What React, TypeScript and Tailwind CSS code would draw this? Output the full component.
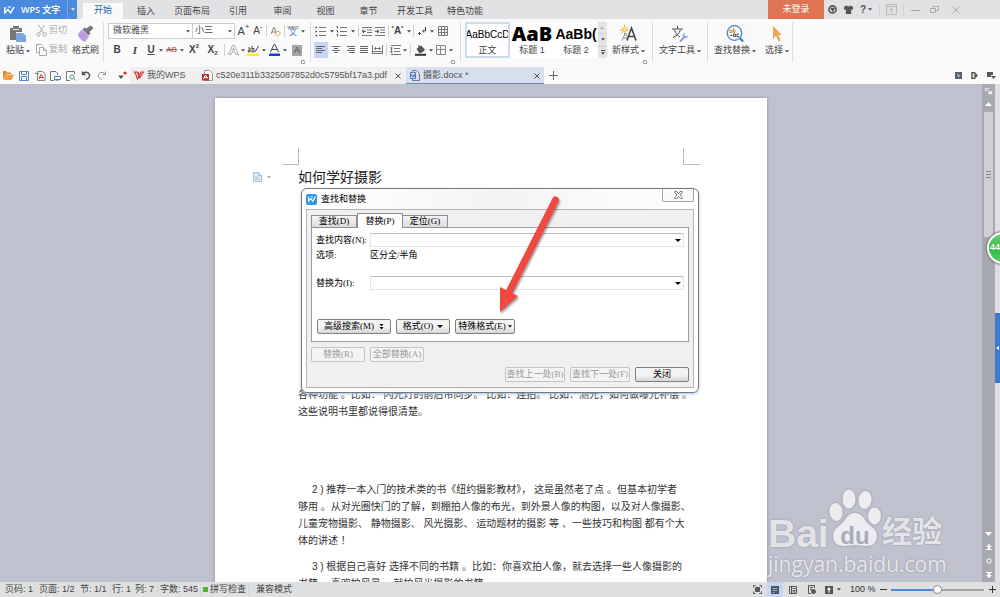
import React, { ReactNode } from "react";

const UI = "font-['Liberation_Sans','Noto_Sans_CJK_SC',sans-serif]";
const SERIF = "font-['Liberation_Serif','Noto_Sans_CJK_SC',serif]";

function Svg({ className, box = "0 0 16 16", children }: { className: string; box?: string; children: ReactNode }) {
  return (
    <svg className={className} viewBox={box} fill="none" stroke="currentColor" strokeWidth="1" aria-hidden="true">
      {children}
    </svg>
  );
}

function Caret({ className = "text-[#444]" }: { className?: string }) {
  return (
    <Svg className={`h-[3px] w-[4px] shrink-0 ${className}`} box="0 0 4 3">
      <path d="M0 .3h4L2 2.600z" fill="currentColor" stroke="none" />
    </Svg>
  );
}

function ComboCaret() {
  return (
    <Svg className="h-[3px] w-[6px] shrink-0 text-black" box="0 0 6 3">
      <path d="M0 0h6L3 3z" fill="currentColor" stroke="none" />
    </Svg>
  );
}

function Tool({ w, label, className = "", children }: { w: string; label: string; className?: string; children: ReactNode }) {
  return (
    <button aria-label={label} className={`flex h-4 shrink-0 items-center justify-center leading-none ${w} ${className}`}>
      {children}
    </button>
  );
}

function Drop({ w = "w-[6px]", label }: { w?: string; label: string }) {
  return (
    <Tool w={w} label={label}>
      <Caret />
    </Tool>
  );
}

function Bar({ w = "w-[4px]" }: { w?: string }) {
  return (
    <span className={`flex h-3 shrink-0 justify-center ${w}`}>
      <span className="w-px bg-[#d2d2d4]" />
    </span>
  );
}

function GroupLine() {
  return <span className="mt-[3px] h-10 w-px shrink-0 bg-[#dcdcdc]" />;
}

function Launcher({ className }: { className: string }) {
  return (
    <button aria-label="更多设置" className={`absolute bottom-[3px] ${className}`}>
      <Svg className="h-[4px] w-[4px] text-[#999]" box="0 0 4 4">
        <path d="M.5 3.500v-3h3M3.500 1.500v2h-2" />
      </Svg>
    </button>
  );
}

function Lines({ widths }: { widths: [number, number][] }) {
  return (
    <Svg className="h-[10px] w-[10px] text-[#666]" box="0 0 10 10">
      {widths.map(([a, b], i) => (
        <path key={i} d={`M${a} ${i * 2 + 1.5}H${b}`} />
      ))}
    </Svg>
  );
}

function ListIcon({ numbered }: { numbered?: boolean }) {
  return (
    <Svg className="h-[11px] w-[12px] text-[#777]" box="0 0 12 11">
      <path d="M4 1.500h7M4 5.500h7M4 9.500h7" />
      {numbered ? (
        <path d="M.5 .5h1v2M.5 4.500h1v2M.5 8.500h1v2" stroke="#555" />
      ) : (
        <path d="M.5 1.500H2M.5 5.500H2M.5 9.500H2" stroke="#444" strokeWidth="1.500" />
      )}
    </Svg>
  );
}

function IndentIcon({ right }: { right?: boolean }) {
  return (
    <Svg className="h-[11px] w-[10px] text-[#777]" box="0 0 10 11">
      <path d="M0 1.500h10M5 4h5M5 6.500h5M0 9.500h10" />
      {right ? <path d="M0 5.300h3M2 3.600l2 1.700-2 1.700" stroke="#444" /> : <path d="M1 5.300h3M2 3.600L0 5.300 2 7" stroke="#444" />}
    </Svg>
  );
}

function WpsMark({ className }: { className: string }) {
  return (
    <Svg className={className} box="0 0 12 9">
      <path d="M.8 1v6.800L4.200 4l3 3.800L11 1.200V1" strokeWidth="1.700" />
      <path d="M4 1.200h3.500" strokeWidth="1.300" />
    </Svg>
  );
}

const MENUS: [string, string][] = [
  ["插入", "w-[46px]"],
  ["页面布局", "w-[46px]"],
  ["引用", "w-[46px]"],
  ["审阅", "w-[43px]"],
  ["视图", "w-[43px]"],
  ["章节", "w-[43px]"],
  ["开发工具", "w-[50px]"],
  ["特色功能", "w-[50px]"],
];

function TitleBar() {
  return (
    <header className="flex h-[19px] shrink-0 items-stretch bg-[#e2e2e5] text-[9px] text-[#444]">
      <button className="flex w-[77px] items-center gap-[6px] bg-[#4a8ade] pl-1 text-white">
        <WpsMark className="h-[8px] w-[11px]" />
        <span className="flex-1 text-left font-['Open_Sans','Noto_Sans_CJK_SC',sans-serif] font-semibold whitespace-nowrap">WPS 文字</span>
        <span className="flex h-full w-[10px] items-center justify-center border-l border-[#72a5e6]">
          <Caret className="text-white" />
        </span>
      </button>
      <nav className="ml-[6px] flex">
        <button className="mt-[3px] w-10 bg-[#fafafa] text-[#2467b4]">开始</button>
        {MENUS.map(([name, w]) => (
          <button key={name} className={`pt-[4px] ${w}`}>
            {name}
          </button>
        ))}
      </nav>
      <button className="ml-auto w-14 bg-[#de7452] text-white">未登录</button>
      <div className="flex w-[176px] items-center text-[#555]">
        <Tool w="w-[17px]" label="皮肤">
          <Svg className="h-[9px] w-[9px]" box="0 0 10 10">
            <circle cx="5" cy="5" r="4" strokeWidth="1.800" />
            <path d="M2 3h6L5.500 8z" fill="currentColor" stroke="none" />
          </Svg>
        </Tool>
        <Tool w="w-[15px]" label="换肤">
          <Svg className="h-[9px] w-[9px]" box="0 0 10 10">
            <path d="M3 .5L0 2v3h2v5h6V5h2V2L7 .5C6 2 4 2 3 .5z" fill="currentColor" stroke="none" />
          </Svg>
        </Tool>
        <Tool w="w-[20px]" label="帮助" className="gap-[2px] text-[10px] font-bold">
          ?<Caret />
        </Tool>
        <Bar w="w-[6px]" />
        <Tool w="w-[18px]" label="功能区" className="text-[#bbb]">
          <Svg className="h-[11px] w-[11px]" box="0 0 11 11">
            <path d="M.5 .5h10v10H.5zM.5 2.500h10M5.500 9V4.500M3.500 6.500l2-2 2 2" />
          </Svg>
        </Tool>
        <Bar w="w-[7px]" />
        <Tool w="w-[17px]" label="最小化" className="text-[#aaa]">
          <Svg className="h-[9px] w-[9px]" box="0 0 9 9">
            <path d="M0 5.500h9" />
          </Svg>
        </Tool>
        <Tool w="w-[20px]" label="还原" className="text-[#aaa]">
          <Svg className="h-[9px] w-[9px]" box="0 0 9 9">
            <path d="M.5 3.500h5v4h-5zM3 3.500v-2h5.500v4H6" />
          </Svg>
        </Tool>
        <Tool w="w-[24px]" label="关闭窗口" className="text-[#aaa]">
          <Svg className="h-[8px] w-[8px]" box="0 0 8 8">
            <path d="M.5 .5l7 7M7.500 .5l-7 7" />
          </Svg>
        </Tool>
      </div>
    </header>
  );
}

function BigTool({ w, label, caret, children }: { w: string; label: string; caret?: boolean; children: ReactNode }) {
  return (
    <button className={`flex shrink-0 flex-col items-center pt-[5px] ${w}`}>
      <span className="flex h-[19px] items-center">{children}</span>
      <span className="flex h-4 items-center gap-[2px] whitespace-nowrap">
        {label}
        {caret && <Caret />}
      </span>
    </button>
  );
}

function Ribbon() {
  return (
    <section className="flex h-[48px] shrink-0 bg-[#fafafa] text-[9px] text-[#444]">
      <BigTool w="w-[36px]" label="粘贴" caret>
        <Svg className="h-[18px] w-[18px]" box="0 0 18 18">
          <path d="M1 3h3V1h6v2h3v4H7v8H1z" fill="#777" stroke="none" />
          <path d="M4 4.500h6" stroke="#eee" />
          <path d="M7 8h7l3 3v6H7z" fill="#7ba3e0" stroke="none" />
        </Svg>
      </BigTool>
      <div className="flex w-[32px] flex-col gap-[3px] pt-[4px] text-[#aaa]">
        <button className="flex h-4 items-center gap-[2px] whitespace-nowrap">
          <Svg className="h-[12px] w-[11px] shrink-0" box="0 0 11 12">
            <path d="M2.500 0l5 8M8.500 0l-5 8" />
            <circle cx="2.500" cy="9.500" r="1.700" />
            <circle cx="8.500" cy="9.500" r="1.700" />
          </Svg>
          剪切
        </button>
        <button className="flex h-4 items-center gap-[2px] whitespace-nowrap">
          <Svg className="h-[12px] w-[11px] shrink-0" box="0 0 11 12">
            <path d="M3 8.500H.5v-8h5l1 1v1M3.500 3.500h4l3 3v5h-7zM7.500 3.500v3h3" />
          </Svg>
          复制
        </button>
      </div>
      <BigTool w="w-[35px]" label="格式刷">
        <Svg className="h-[17px] w-[17px]" box="0 0 17 17">
          <path d="M13.500 .5l3 2.500-4 4 1 1.500-2 2-6-6 2-2 2 1z" fill="#777" stroke="none" />
          <path d="M5 4.500l7 7-4 5.500C5 16 2 13 .5 9.500z" fill="#c29be6" stroke="none" />
        </Svg>
      </BigTool>
      <GroupLine />

      <div className="relative flex w-[206px] flex-col gap-[3px] pt-[4px] pl-1">
        <div className="flex h-4 items-center">
          <label className="relative flex h-4 w-[85px] items-center border border-[#ccc] bg-white">
            <select aria-label="字体" className="h-full w-full appearance-none pl-1 outline-none">
              <option>微软雅黑</option>
            </select>
            <Caret className="absolute right-[2px] text-[#444]" />
          </label>
          <label className="relative flex h-4 w-[42px] items-center border border-l-0 border-[#ccc] bg-white">
            <select aria-label="字号" className="h-full w-full appearance-none pl-[2px] outline-none">
              <option>小三</option>
            </select>
            <Caret className="absolute right-[2px] text-[#444]" />
          </label>
          <Tool w="w-[17px]" label="增大字号" className="text-[11px]">
            A<sup className="text-[8px]">+</sup>
          </Tool>
          <Tool w="w-[12px]" label="减小字号" className="text-[10px]">
            A<sup className="text-[8px]">-</sup>
          </Tool>
          <Bar />
          <Tool w="w-[14px]" label="清除格式">
            <Svg className="h-[11px] w-[11px]" box="0 0 11 11">
              <path d="M1 8L4 1l3 7M2 6h4" stroke="#888" />
              <path d="M5 8l3-3 2.500 2L7.500 10z" fill="#fff" stroke="#e9a24c" />
            </Svg>
          </Tool>
          <Bar />
          <Tool w="w-[14px]" label="拼音指南" className="flex-col text-[6px] text-[#555]">
            <span className="leading-[4px]">wén</span>
            <span className="text-[8px] leading-[8px] text-[#3b7bc8]">文</span>
          </Tool>
          <Drop label="拼音选项" />
        </div>
        <div className="flex h-4 items-center">
          <Tool w="w-[18px]" label="加粗" className="text-[10px] font-bold">B</Tool>
          <Tool w="w-[18px]" label="倾斜" className="font-['Liberation_Serif',serif] text-[11px] font-bold italic">I</Tool>
          <Tool w="w-[14px]" label="下划线" className="text-[10px] font-bold underline">U</Tool>
          <Drop label="下划线选项" />
          <Tool w="w-[15px]" label="删除线" className="text-[8px] text-[#a0504a] line-through">AB</Tool>
          <Drop label="删除线选项" />
          <Tool w="w-[18px]" label="上标" className="text-[10px] font-bold">
            X<sup className="-top-[4px] text-[6px]">2</sup>
          </Tool>
          <Tool w="w-[19px]" label="下标" className="text-[10px] font-bold">
            X<sub className="-bottom-[3px] text-[6px]">2</sub>
          </Tool>
          <Bar />
          <Tool w="w-[14px]" label="文字效果">
            <Svg className="h-[10px] w-[11px] text-[#aaa]" box="0 0 11 10">
              <path d="M.5 9.500l4-9h2l4 9H8L7 7H4L3 9.500zM4.700 5.200h1.600L5.500 3z" />
            </Svg>
          </Tool>
          <Drop label="文字效果选项" />
          <Tool w="w-[14px]" label="突出显示">
            <Svg className="h-[12px] w-[12px]" box="0 0 12 12">
              <rect y="9.500" width="12" height="2.500" fill="#ffee22" stroke="none" />
              <path d="M1 4h2v4H1.500L1 6.500 3 6M5 2v6h2V4.500H5M8 8l3.500-6" stroke="#444" />
            </Svg>
          </Tool>
          <Drop w="w-[7px]" label="突出显示选项" />
          <Tool w="w-[14px]" label="字体颜色">
            <Svg className="h-[12px] w-[11px]" box="0 0 11 12">
              <path d="M1.500 8L5 0.500h1L9.500 8M3 5.500h5" stroke="#444" />
              <rect y="9.500" width="11" height="2.500" fill="#1d3fd0" stroke="none" />
            </Svg>
          </Tool>
          <Drop w="w-[7px]" label="字体颜色选项" />
          <Tool w="w-[18px]" label="字符底纹">
            <span className="flex h-[11px] w-[10px] items-center justify-center bg-[#a5a5a9] text-[9px]">A</span>
          </Tool>
        </div>
        <Launcher className="right-[5px]" />
      </div>
      <GroupLine />

      <div className="relative flex w-[149px] flex-col gap-[3px] pt-[4px] pl-[3px]">
        <div className="flex h-4 items-center">
          <Tool w="w-[14px]" label="项目符号"><ListIcon /></Tool>
          <Drop w="w-[7px]" label="项目符号选项" />
          <Tool w="w-[14px]" label="编号"><ListIcon numbered /></Tool>
          <Drop w="w-[7px]" label="编号选项" />
          <Bar />
          <Tool w="w-[13px]" label="减少缩进"><IndentIcon /></Tool>
          <Tool w="w-[14px]" label="增加缩进"><IndentIcon right /></Tool>
          <Bar w="w-[2px]" />
          <Tool w="w-[17px]" label="字符缩放" className="text-[10px] font-bold">
            <sup className="text-[6px]">*</sup>A<sup className="text-[6px]">*</sup>
          </Tool>
          <Drop label="字符缩放选项" />
          <Bar w="w-[3px]" />
          <Tool w="w-[14px]" label="换行">
            <Svg className="h-[9px] w-[9px]" box="0 0 9 9">
              <path d="M7.500 0v4H5M3 6.500H.5M2 5L.5 6.500 2 8M6 2.500L4.500 4 6 5.500" />
            </Svg>
          </Tool>
          <Drop label="换行选项" />
          <Tool w="w-[16px]" label="插入表格">
            <Svg className="h-[10px] w-[10px] text-[#777]" box="0 0 10 10">
              <path d="M.5 .5h9v9h-9zM.5 3.500h9M.5 6.500h9M3.500 .5v9M6.500 .5v9" />
            </Svg>
          </Tool>
        </div>
        <div className="flex h-4 items-center">
          <Tool w="w-[14px]" label="左对齐" className="bg-[#c5d7f0]"><Lines widths={[[0, 9], [0, 6], [0, 9], [0, 6]]} /></Tool>
          <Tool w="w-[15px]" label="居中"><Lines widths={[[1, 9], [3, 7], [1, 9], [3, 7]]} /></Tool>
          <Tool w="w-[14px]" label="右对齐"><Lines widths={[[2, 10], [4, 10], [2, 10], [4, 10]]} /></Tool>
          <Tool w="w-[13px]" label="两端对齐"><Lines widths={[[1, 9], [1, 9], [1, 9], [1, 9]]} /></Tool>
          <Tool w="w-[14px]" label="分散对齐">
            <Svg className="h-[10px] w-[11px] text-[#777]" box="0 0 11 10">
              <path d="M.5 0v9M10.500 0v9M2 3.500h7M3.500 2v3M7.500 2v3M1 6.500h9M1 8.500h9" />
            </Svg>
          </Tool>
          <Bar w="w-[5px]" />
          <Tool w="w-[13px]" label="行距">
            <Svg className="h-[10px] w-[11px] text-[#777]" box="0 0 11 10">
              <path d="M1 .5h10M4 3.500h6M4 6.500h6M1 9.500h10M1.500 2v6M.3 3.500L1.500 2l1.200 1.500M.3 6.500L1.500 8l1.200-1.500" />
            </Svg>
          </Tool>
          <Drop label="行距选项" />
          <Bar w="w-[5px]" />
          <Tool w="w-[15px]" label="底纹">
            <Svg className="h-[11px] w-[11px]" box="0 0 11 11">
              <path d="M2 4l4-3 3.500 4L5 8zM4 3V0" fill="#555" />
              <path d="M0 9.800h11" strokeWidth="2" stroke="#333" />
            </Svg>
          </Tool>
          <Drop label="底纹选项" />
          <Tool w="w-[14px]" label="边框">
            <Svg className="h-[10px] w-[10px] text-[#888]" box="0 0 10 10">
              <path d="M.5 .5h9v9h-9zM.5 4.500h9M4.500 .5v9" />
            </Svg>
          </Tool>
          <Drop label="边框选项" />
        </div>
        <Launcher className="right-[5px]" />
      </div>
      <GroupLine />

      <div className="mt-[3px] ml-1 flex h-9 w-[142px] shrink-0 bg-white">
        <button className="flex w-[45px] flex-col items-center justify-between overflow-hidden border-2 border-[#cddaf0] pt-[3px] whitespace-nowrap">
          <span className="text-[10px] leading-4 text-black">AaBbCcD</span>
          <span className="leading-3">正文</span>
        </button>
        <button className="flex w-[44px] flex-col items-center justify-between overflow-hidden pt-[2px] pb-[2px] whitespace-nowrap">
          <span className="font-['Open_Sans',sans-serif] text-[20px] leading-[20px] font-extrabold text-black">AaB</span>
          <span className="leading-3">标题 1</span>
        </button>
        <button className="flex w-[44px] flex-col items-center justify-between overflow-hidden pt-[2px] pb-[2px] whitespace-nowrap">
          <span className="text-[14px] leading-[20px] font-bold text-black">AaBb(</span>
          <span className="leading-3">标题 2</span>
        </button>
        <div className="flex flex-1 flex-col gap-px bg-[#cfcfd1]">
          <button aria-label="上一行样式" className="flex flex-1 rotate-180 items-center justify-center bg-[#e4e4e6]"><Caret className="text-[#aaa]" /></button>
          <button aria-label="下一行样式" className="flex flex-1 items-center justify-center bg-[#e4e4e6]"><Caret /></button>
          <button aria-label="全部样式" className="flex flex-1 flex-col items-center justify-center gap-px bg-[#e4e4e6]">
            <span className="h-px w-[4px] bg-[#444]" />
            <Caret />
          </button>
        </div>
      </div>
      <div className="relative flex w-[45px]">
        <BigTool w="w-[43px]" label="新样式" caret>
          <Svg className="h-[17px] w-[17px]" box="0 0 17 17">
            <circle cx="4.500" cy="5" r="2" fill="#fbe9a0" stroke="#e2b92e" />
            <path d="M4.500 0v2M4.500 8v2M0 5h2M7 5h2M1 1.500L2.500 3M8 1.500L6.500 3M1 8.500L2.500 7" stroke="#e2b92e" />
            <path d="M2 15.500L5.500 8l2 4M4 13h3" stroke="#888" />
            <path d="M7 15.500L11.500 3 16 15.500M8.500 11.500h6" stroke="#444" strokeWidth="1.600" />
          </Svg>
        </BigTool>
        <Launcher className="right-[5px]" />
      </div>
      <GroupLine />
      <BigTool w="w-[54px]" label="文字工具" caret>
        <Svg className="h-[16px] w-[16px]" box="0 0 16 16">
          <path d="M5.500 0v2.500M0 3h11M2.500 4C4 8 6 10 8 11M8.500 4C7 8 4 10 1 11.500" stroke="#444" />
          <path d="M7 15.500l4-4.500c-1-2 .5-4 2.500-4L12 9l1.500 1.500L16 9.500c0 2-2 3-3.500 2.700L9 16z" fill="#8d9bd3" stroke="none" />
        </Svg>
      </BigTool>
      <GroupLine />
      <BigTool w="w-[54px]" label="查找替换" caret>
        <Svg className="h-[17px] w-[18px]" box="0 0 18 17">
          <circle cx="8.500" cy="8" r="7.300" stroke="#3c82d0" strokeWidth="1.200" />
          <path d="M13.500 12.500l3.500 4" stroke="#3c82d0" strokeWidth="2.400" />
          <path d="M4 5h2v2.500H4zM7.500 3v4.500H9V5H7.500" stroke="#d8923e" />
          <path d="M4 10.500h2.500M9.500 9h-2v2.500h2V9M13 9h-2v2.500h2" stroke="#555" />
        </Svg>
      </BigTool>
      <BigTool w="w-[30px]" label="选择" caret>
        <Svg className="h-[16px] w-[11px]" box="0 0 11 16">
          <path d="M1 0v13l3-3 2.500 5.500 2-1L6.500 9H10z" fill="#eda55c" stroke="none" />
        </Svg>
      </BigTool>
      <GroupLine />
    </section>
  );
}

function FileTabs() {
  return (
    <div className="flex h-[17px] shrink-0 items-stretch bg-[#fafafa] text-[9px] text-[#555]">
      <div className="flex w-[130px] items-center">
        <Tool w="w-[16px]" label="打开">
          <Svg className="h-[9px] w-[11px]" box="0 0 11 9">
            <path d="M0 8V0h3l1 1.500h4V3H3z" fill="#e08a2e" stroke="none" />
            <path d="M2.500 3.500H11L8.500 9H.5z" fill="#f0a040" stroke="none" />
          </Svg>
        </Tool>
        <Tool w="w-[16px]" label="保存">
          <Svg className="h-[10px] w-[10px] text-[#4a86c8]" box="0 0 10 10">
            <path d="M.5 .5h9v9h-9zM2.500 .5v3h5v-3M2.500 9.500v-4h5v4" />
          </Svg>
        </Tool>
        <Tool w="w-[16px]" label="输出为PDF">
          <Svg className="h-[10px] w-[11px]" box="0 0 11 10">
            <path d="M2.500 .5h5l2.500 2v7H2.500z" stroke="#888" />
            <path d="M4 8l2-4.500L8.500 7 4 6" stroke="#c33b34" />
            <path d="M0 2.500h4" stroke="#4d9a68" />
          </Svg>
        </Tool>
        <Tool w="w-[15px]" label="打印">
          <Svg className="h-[10px] w-[11px]" box="0 0 11 10">
            <path d="M7.500 4V2L6 .5H.5v9H4" stroke="#777" />
            <path d="M4.500 5.500h6v3h-6zM6 8v2h3" stroke="#5a78b4" />
          </Svg>
        </Tool>
        <Tool w="w-[15px]" label="打印预览">
          <Svg className="h-[10px] w-[10px]" box="0 0 10 10">
            <path d="M8.500 3V.5h-8v9H4" stroke="#777" />
            <circle cx="6" cy="6" r="2" stroke="#4d9a68" />
            <path d="M7.500 7.500l2 2" stroke="#4d9a68" />
          </Svg>
        </Tool>
        <Tool w="w-[16px]" label="撤销">
          <Svg className="h-[9px] w-[10px]" box="0 0 10 9">
            <path d="M1.500 .5v3h3M1.500 3.500C4 0 9 1 8.500 5 8.300 7 7 8 5 8.500" strokeWidth="1.500" />
          </Svg>
        </Tool>
        <Tool w="w-[15px]" label="恢复" className="text-[#999]">
          <Svg className="h-[9px] w-[10px]" box="0 0 10 9">
            <path d="M8.500 .5v3h-3M8.500 3.500C6 0 1 1 1.500 5 1.700 7 3 8 5 8.500" />
          </Svg>
        </Tool>
        <Tool w="w-[21px]" label="自定义" className="pl-[5px]">
          <Svg className="h-[9px] w-[9px]" box="0 0 9 9">
            <path d="M0 4.500h6L3 8z" fill="#555" stroke="none" />
            <circle cx="7" cy="2" r="1.500" fill="#cc2a22" stroke="none" />
          </Svg>
        </Tool>
      </div>
      <div className="flex bg-[#efeff0]">
        <button className="flex w-[70px] items-center gap-[3px] pl-[3px] whitespace-nowrap">
          <Svg className="h-[9px] w-[11px] text-[#cf3a36]" box="0 0 11 9">
            <path d="M.5 1h4l2 6M2 1l2.500 7L8 1.500M5 1l2 5.500L10.500 1H7.500" strokeWidth="1.200" />
          </Svg>
          我的WPS
        </button>
        <div className="flex w-[206px] items-center gap-[3px] pl-[2px]">
          <Svg className="h-[11px] w-[11px] shrink-0" box="0 0 11 11">
            <path d="M2.500 .5h5l3 3v7h-8z" fill="#fff" stroke="#999" />
            <rect y="4" width="7" height="6.500" fill="#c22d28" stroke="none" />
            <path d="M1.500 9l2-4L5.500 8 2 7.500" stroke="#fff" />
          </Svg>
          <a href="#pdf" className="flex-1 whitespace-nowrap">c520e311b3325087852d0c5795bf17a3.pdf</a>
          <button aria-label="关闭 pdf" className="mr-[5px]">
            <Svg className="h-[6px] w-[6px]" box="0 0 6 6">
              <path d="M.5 .5l5 5M5.500 .5l-5 5" />
            </Svg>
          </button>
        </div>
      </div>
      <div className="flex w-[138px] items-center gap-[3px] bg-[#d8e0f0] pl-1 shadow-[inset_0_-1px_0_#5d8cc9]">
        <Svg className="h-[11px] w-[10px] shrink-0 text-[#777]" box="0 0 10 11">
          <path d="M2.500 2.500v-2h4l3 3v7h-7V9" />
          <path d="M.5 2.500h5v6h-5zM1.500 4l1 3 .7-2 .8 2 .8-3" stroke="#4a78b8" />
        </Svg>
        <a href="#docx" className="flex-1 whitespace-nowrap">摄影.docx *</a>
        <button aria-label="关闭文档" className="mr-1">
          <Svg className="h-[6px] w-[6px]" box="0 0 6 6">
            <path d="M.5 .5l5 5M5.500 .5l-5 5" />
          </Svg>
        </button>
      </div>
      <button aria-label="新建" className="px-[5px]">
        <Svg className="h-[9px] w-[9px] text-[#666]" box="0 0 9 9">
          <path d="M4.500 0v9M0 4.500h9" />
        </Svg>
      </button>
      <div className="ml-auto flex items-center gap-[9px] pr-1">
        <button aria-label="导航">
          <Svg className="h-[7px] w-[7px]" box="0 0 7 7">
            <path d="M0 0h7v7H0z" fill="#5b6175" stroke="none" />
            <path d="M2 2l1.500 1.500v2M3.500 3.500H5" stroke="#c8cedd" />
          </Svg>
        </button>
        <button aria-label="文档">
          <Svg className="h-[7px] w-[7px] text-[#555]" box="0 0 7 7">
            <path d="M1 .8h2.500L6 3.500 3.500 6.200H1zM3 3.500h3" strokeWidth="1.500" />
          </Svg>
        </button>
        <button aria-label="选项">
          <Svg className="h-[8px] w-[9px]" box="0 0 9 8">
            <path d="M0 0h6v3H4v2H0zM4 4h5L6.500 7z" fill="#555" stroke="none" />
          </Svg>
        </button>
      </div>
    </div>
  );
}

function DialogButton({ w, disabled, children }: { w: string; disabled?: boolean; children: ReactNode }) {
  const look = disabled
    ? "border-[#c3c3c3] bg-[#f4f4f4] text-[#999]"
    : "border-[#808080] bg-linear-to-b from-[#f4f4f4] from-50% to-[#d6d6d6] text-black";
  return (
    <button disabled={disabled} className={`flex h-[15px] shrink-0 items-center justify-center gap-1 rounded-xs border leading-none whitespace-nowrap ${w} ${look}`}>
      {children}
    </button>
  );
}

function Combo({ id, label }: { id: string; label: string }) {
  return (
    <div className="flex h-[14px] items-center">
      <label htmlFor={id} className="w-[54px] shrink-0 whitespace-nowrap">{label}</label>
      <div className="flex h-full flex-1 items-center border border-[#e2e3ea] border-t-[#b9bcc4] bg-white">
        <input id={id} className="h-full min-w-0 flex-1 px-1 outline-none" />
        <button aria-label={`${label}历史`} className="px-[2px]">
          <ComboCaret />
        </button>
      </div>
    </div>
  );
}

function FindReplaceDialog() {
  return (
    <div
      role="dialog"
      aria-labelledby="dlg-title"
      className={`absolute top-[90px] left-[86px] flex h-[205px] w-[398px] flex-col rounded-md border border-[#77787c] bg-linear-to-r from-white via-[#f4f4f4] to-white px-1 pb-1 text-[9px] leading-none text-black shadow-[0_1px_3px_#9fc4e4] ${SERIF}`}
    >
      <div className="flex h-5 shrink-0 items-center gap-1">
        <span className="flex h-[11px] w-[11px] items-center justify-center rounded-xs bg-[#2f97e8] text-white">
          <WpsMark className="h-[6px] w-[8px]" />
        </span>
        <h2 id="dlg-title">查找和替换</h2>
        <button aria-label="关闭对话框" className="ml-auto flex h-[13px] w-8 items-center justify-center self-start rounded-b-xs border border-t-0 border-[#a3a3a6] bg-[#fafafa]">
          <Svg className="h-[8px] w-[9px]" box="0 0 9 8">
            <path d="M.8 .5h2L4.500 2.500 6.200 .5h2v1L6 4l2.200 2.500v1h-2L4.500 5.500 2.800 7.500h-2v-1L3 4 .8 1.500z" stroke="#777" fill="#fff" />
          </Svg>
        </button>
      </div>
      <div className="flex flex-1 flex-col border border-[#b5b5b8] bg-[#f0f0f0] px-1 pt-[3px]">
        <div role="tablist" className="z-1 -mb-px flex items-end">
          <button role="tab" className="h-[13px] w-[46px] border border-[#8e8f93] bg-linear-to-b from-[#f4f4f4] to-[#dcdcdc]">查找(D)</button>
          <button role="tab" aria-selected="true" className="h-[15px] w-[46px] border border-b-0 border-[#8e8f93] bg-white">替换(P)</button>
          <button role="tab" className="h-[13px] w-[45px] border border-l-0 border-[#8e8f93] bg-linear-to-b from-[#f4f4f4] to-[#dcdcdc]">定位(G)</button>
        </div>
        <div className="flex h-[115px] shrink-0 flex-col border border-[#9c9da1] bg-white px-[4px] pt-[5px]">
          <Combo id="find" label="查找内容(N):" />
          <div className="mt-[2px] flex h-3 items-center">
            <span className="w-[54px]">选项:</span>
            <span>区分全/半角</span>
          </div>
          <div className="h-[15px]" />
          <Combo id="replace" label="替换为(I):" />
          <div className="mt-[29px] flex gap-[5px] pl-px">
            <DialogButton w="w-[74px]">
              高级搜索(M)
              <Svg className="ml-px h-[6px] w-[5px]" box="0 0 5 6">
                <path d="M.5 0h4L2.500 2.200zM.5 3h4L2.500 5.400z" fill="#000" stroke="none" />
              </Svg>
            </DialogButton>
            <DialogButton w="w-[54px]">
              格式(O) <ComboCaret />
            </DialogButton>
            <DialogButton w="w-[60px]">
              <span>特殊格式(E)</span>
              <Caret className="-ml-[2px] text-black" />
            </DialogButton>
          </div>
        </div>
        <div className="mt-[5px] flex gap-[5px]">
          <DialogButton w="w-[54px]" disabled>替换(R)</DialogButton>
          <DialogButton w="w-[54px]" disabled>全部替换(A)</DialogButton>
        </div>
        <div className="mt-[5px] flex justify-end gap-[5px]">
          <DialogButton w="w-[60px]" disabled>查找上一处(B)</DialogButton>
          <DialogButton w="w-[60px]" disabled>查找下一处(F)</DialogButton>
          <DialogButton w="w-[54px]">关闭</DialogButton>
        </div>
      </div>
      <Svg className="pointer-events-none absolute top-[4px] left-[190px] h-[125px] w-[72px] drop-shadow-[1px_2px_1px_rgba(0,0,0,0.4)]" box="0 0 72 125">
        <path d="M63.500 7L16 101" stroke="#f24842" strokeWidth="7" strokeLinecap="round" />
        <path d="M8 94l18 9L8 119z" fill="#f24842" stroke="none" />
      </Svg>
    </div>
  );
}

function Page() {
  return (
    <article className="relative mx-auto mt-[14px] h-[600px] w-[552px] bg-white text-[10px] leading-[17px] text-[#333] shadow-[0_0_3px_#888a99]">
      <div className="flex justify-between px-[67px] pt-[50px]">
        <span className="h-[17px] w-[17px] border-r border-b border-[#bbb]" />
        <span className="h-[17px] w-[17px] border-b border-l border-[#bbb]" />
      </div>
      <div className="flex h-6 items-center">
        <button aria-label="粘贴选项" className="ml-[38px] flex w-[45px] items-center gap-[5px]">
          <Svg className="h-[10px] w-[9px]" box="0 0 9 10">
            <path d="M.5 .5h5l3 3v6h-8z" fill="#dceaf4" stroke="#9fc0d8" />
            <path d="M5.500 .5v3h3M2 5h3M2 7h4.500" stroke="#9fc0d8" />
          </Svg>
          <Caret className="text-[#999]" />
        </button>
        <h1 className="text-[14px] text-[#222]">如何学好摄影</h1>
      </div>
      <div className="pt-[197px] pl-[83px] whitespace-pre">
        <p>各种功能 。比如： 闪光灯的前后帘同步。 比如：连拍。 比如：测光，如何做曝光补偿 。<br />这些说明书里都说得很清楚。</p>
        <p className="mt-[61px]">
          {"     2 ) 推荐一本入门的技术类的书《纽约摄影教材》， 这是虽然老了点 。但基本初学者"}<br />
          {"够用 。从对光圈快门的了解，到棚拍人像的布光，到外景人像的构图，以及对人像摄影、"}<br />
          {"儿童宠物摄影、 静物摄影、 风光摄影、 运动题材的摄影 等 、一些技巧和构图 都有个大"}<br />
          {"体的讲述 ！"}
        </p>
        <p className="mt-[9px]">
          {"     3 ) 根据自己喜好 选择不同的书籍 。比如：你喜欢拍人像，就去选择一些人像摄影的"}<br />
          {"书籍。 喜欢拍风景， 就拍风光摄影的书籍"}
        </p>
      </div>
      <FindReplaceDialog />
    </article>
  );
}

function Watermark() {
  return (
    <div className="pointer-events-none absolute right-[36px] bottom-[5px] w-[178px] text-white/75 [text-shadow:0_0_2px_#8b8e9c]">
      <div className="flex h-[62px] items-end whitespace-nowrap">
        <span className="w-[61px] text-[39px] leading-[34px] font-bold">Bai</span>
        <span className="relative flex h-[62px] w-[52px] shrink-0 items-end justify-center pb-[2px]">
          <Svg className="absolute top-0 left-0 h-[58px] w-[52px] drop-shadow-[0_0_1px_#8b8e9c]" box="0 0 52 58">
            <g fill="#ececf1" stroke="none">
              <ellipse cx="7" cy="23" rx="6.500" ry="9" transform="rotate(-8 7 23)" />
              <ellipse cx="20" cy="10" rx="6.500" ry="9.500" />
              <ellipse cx="36" cy="11" rx="6.500" ry="9" transform="rotate(10 36 11)" />
              <ellipse cx="45.500" cy="27" rx="6.500" ry="8.500" />
              <path d="M26 24c5 0 8 3 10 7 3 5 12 8 12 16 0 7-5 10-11 10-4 0-7-1-11-1s-7 1-11 1C9 57 4 54 4 47c0-8 9-11 12-16 2-4 5-7 10-7z" />
            </g>
          </Svg>
          <span className="relative text-[24px] leading-[26px] font-bold text-[#a9abb9] [text-shadow:none]">du</span>
        </span>
        <span className="pl-px text-[30px] leading-[38px] font-bold">经验</span>
      </div>
      <div className="font-['Open_Sans','Noto_Sans',sans-serif] text-[21px] leading-[26px]">jingyan.baidu.com</div>
    </div>
  );
}

function Scrollbar() {
  return (
    <aside className="relative flex w-[18px] shrink-0 bg-[#dedfe1]">
      <div className="flex w-[13px] flex-col items-center bg-[#a8a8b0] text-white">
        <button aria-label="标尺" className="pt-[3px]">
          <Svg className="h-[8px] w-[9px]" box="0 0 9 8">
            <path d="M.5 .5h5v4h-5zM4 3.500h4.500v4H4z" fill="#eee" stroke="#999" strokeWidth=".5" />
            <path d="M.5 2.500h5M3 .5v4" stroke="#999" strokeWidth=".5" />
          </Svg>
        </button>
        <button aria-label="向上滚动" className="mt-[7px]">
          <Svg className="h-[4px] w-[7px]" box="0 0 7 4">
            <path d="M0 4h7L3.500 0z" fill="#fff" stroke="none" />
          </Svg>
        </button>
        <div className="mt-[6px] flex h-[125px] w-[9px] flex-col items-center justify-center gap-[2px] bg-[#cfcfd4]">
          <span className="h-px w-[5px] bg-[#888]" />
          <span className="h-px w-[5px] bg-[#888]" />
          <span className="h-px w-[5px] bg-[#888]" />
        </div>
        <div className="mt-auto flex flex-col items-center gap-[8px] pb-1">
          <button aria-label="向下滚动">
            <Svg className="h-[4px] w-[7px]" box="0 0 7 4">
              <path d="M0 0h7L3.500 4z" fill="#fff" stroke="none" />
            </Svg>
          </button>
          <button aria-label="上一页">
            <Svg className="h-[6px] w-[6px]" box="0 0 6 6">
              <path d="M0 3h6L3 0zM2 3h2v3H2zM0 5h6v1H0z" fill="#fff" stroke="none" />
            </Svg>
          </button>
          <button aria-label="选择浏览对象">
            <Svg className="h-[6px] w-[6px]" box="0 0 6 6">
              <circle cx="3" cy="3" r="2.200" />
            </Svg>
          </button>
          <button aria-label="下一页">
            <Svg className="h-[6px] w-[6px]" box="0 0 6 6">
              <path d="M0 3h6L3 6zM0 0h6v1H0zM2 1h2v2H2z" fill="#fff" stroke="none" />
            </Svg>
          </button>
        </div>
      </div>
      <button aria-label="展开任务窗格" className="mt-[229px] flex h-[70px] w-[5px] items-center justify-center bg-[#3f78cc]">
        <Svg className="h-[4px] w-[3px]" box="0 0 3 4">
          <path d="M3 0v4L0 2z" fill="#fff" stroke="none" />
        </Svg>
      </button>
      <div className="absolute top-[148px] left-[5px] flex h-8 w-8 items-center rounded-full border-2 border-white bg-linear-to-b from-[#6fd67c] via-[#2fb647] to-[#4fd45c] pl-px text-[9px] font-bold text-white shadow-[0_0_2px_1px_#777]">
        44
      </div>
    </aside>
  );
}

function StatusBar() {
  return (
    <footer className="flex h-[15px] shrink-0 items-center bg-[#dedfe1] pl-[5px] text-[9px] whitespace-nowrap text-[#444]">
      <span className="w-[34px]">页码: 1</span>
      <span className="w-[41px]">页面: 1/2</span>
      <span className="w-[28px]">节: 1/1</span>
      <Bar />
      <span className="w-[23px]">行: 1</span>
      <span className="w-[20px]">列: 7</span>
      <Bar />
      <span className="w-[39px] pl-px">字数: 545</span>
      <Bar />
      <span className="mr-[2px] ml-px h-[5px] w-[5px] bg-[#4fae3c]" />
      <span>拼写检查</span>
      <Bar />
      <span className="ml-[6px]">兼容模式</span>
      <div className="ml-auto flex h-full items-center text-[#555]">
        <Tool w="w-[20px]" label="全屏">
          <Svg className="h-[9px] w-[9px]" box="0 0 9 9">
            <path d="M2.500 2.500h4v4h-4z" fill="currentColor" />
            <path d="M.5 2.500v-2h2M6.500 .5h2v2M8.500 6.500v2h-2M2.500 8.500h-2v-2" />
          </Svg>
        </Tool>
        <Tool w="w-[16px]" label="页面视图" className="bg-[#c6d6f0]">
          <Svg className="h-[8px] w-[8px]" box="0 0 8 8">
            <path d="M0 0h8v8H0z" fill="#4b5263" stroke="none" />
            <path d="M1.500 2.500h5M1.500 4.500h5M1.500 6.500h2" stroke="#c6d6f0" strokeWidth=".7" />
          </Svg>
        </Tool>
        <Tool w="w-[20px]" label="大纲视图">
          <Svg className="h-[8px] w-[8px]" box="0 0 8 8">
            <path d="M.5 .5h7v7h-7zM2.500 .5v7M3.500 2.500h3M3.500 4.500h3M3.500 6h3" />
          </Svg>
        </Tool>
        <Tool w="w-[18px]" label="Web 视图">
          <Svg className="h-[9px] w-[8px]" box="0 0 8 9">
            <path d="M6.500 3V.5h-6v8H3M2 2.500h3M2 4.500h2" />
            <circle cx="5.500" cy="6.500" r="2" fill="currentColor" />
          </Svg>
        </Tool>
        <Tool w="w-[15px]" label="护眼模式">
          <Svg className="h-[8px] w-[8px]" box="0 0 8 8">
            <path d="M0 0h8v8H0z" fill="#555" stroke="none" />
            <circle cx="4" cy="3" r="1.500" fill="#fff" stroke="none" />
            <path d="M4 4v3" stroke="#fff" />
          </Svg>
        </Tool>
        <Drop w="w-[6px]" label="视图选项" />
        <span className="ml-[8px] w-[30px] text-[#333]">100 %</span>
        <button aria-label="缩小" className="flex h-3 w-[11px] items-center"><span className="h-px w-[7px] bg-[#333]" /></button>
        <input
          type="range"
          aria-label="显示比例"
          min={0}
          max={100}
          defaultValue={50}
          className="h-[10px] w-[93px] appearance-none bg-[linear-gradient(to_right,#4a8ade_50%,#a2a2a6_50%)] bg-[length:100%_2px] bg-center bg-no-repeat [&::-webkit-slider-thumb]:h-[9px] [&::-webkit-slider-thumb]:w-[9px] [&::-webkit-slider-thumb]:appearance-none [&::-webkit-slider-thumb]:rounded-full [&::-webkit-slider-thumb]:border [&::-webkit-slider-thumb]:border-[#888] [&::-webkit-slider-thumb]:bg-white"
        />
        <button aria-label="放大" className="flex w-[16px] items-center justify-center">
          <Svg className="h-[7px] w-[7px] text-[#333]" box="0 0 7 7">
            <path d="M3.500 0v7M0 3.500h7" />
          </Svg>
        </button>
      </div>
    </footer>
  );
}

export default function App() {
  return (
    <div className={`flex h-screen flex-col overflow-hidden ${UI}`}>
      <TitleBar />
      <Ribbon />
      <FileTabs />
      <div className="flex min-h-0 flex-1">
        <main className="relative min-w-0 flex-1 overflow-hidden bg-[#c0c1ce]">
          <Page />
          <Watermark />
        </main>
        <Scrollbar />
      </div>
      <StatusBar />
    </div>
  );
}
